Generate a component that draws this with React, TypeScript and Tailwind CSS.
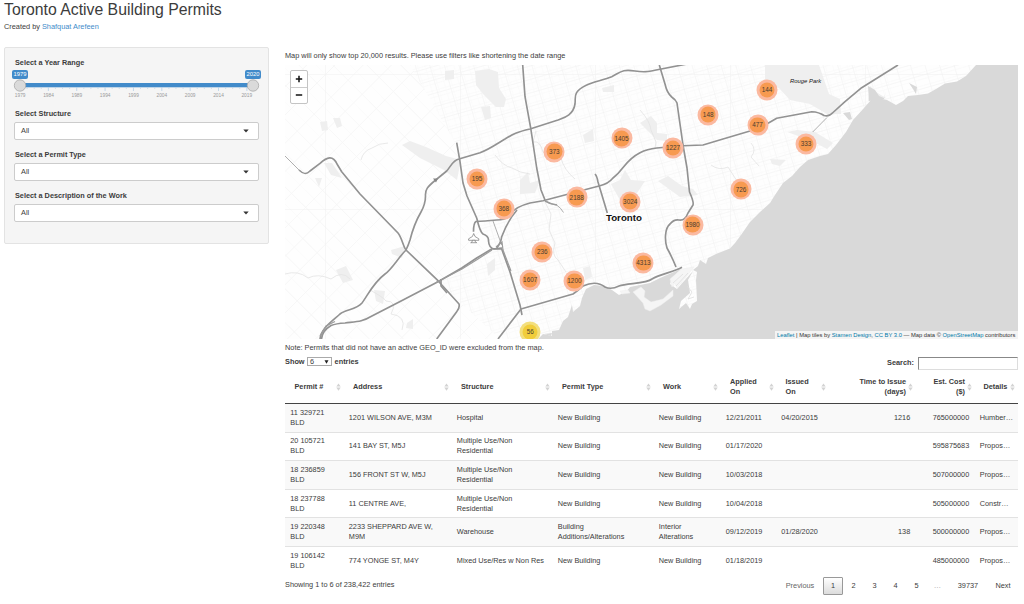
import React from "react";

type Marker = { n: number; x: number; y: number; small?: boolean };

const MAP_X = 285;
const MAP_Y = 65;

const markers: Marker[] = [
  { n: 144, x: 767, y: 90 },
  { n: 148, x: 708.2, y: 114.5 },
  { n: 477, x: 757.5, y: 125 },
  { n: 333, x: 806, y: 144 },
  { n: 1405, x: 621.5, y: 138.3 },
  { n: 1227, x: 673, y: 148.2 },
  { n: 373, x: 554.3, y: 151.7 },
  { n: 195, x: 477, y: 178.8 },
  { n: 726, x: 741, y: 189.3 },
  { n: 2188, x: 576.7, y: 197.3 },
  { n: 3024, x: 630.2, y: 201.5 },
  { n: 368, x: 503.8, y: 208.5 },
  { n: 1980, x: 692.5, y: 224.5 },
  { n: 236, x: 542.3, y: 251.8 },
  { n: 4313, x: 643.4, y: 263 },
  { n: 1607, x: 530.2, y: 279.8 },
  { n: 1200, x: 574.4, y: 281 },
  { n: 56, x: 530.2, y: 332, small: true },
];

const highways = [
  "M299 170C303 174 306 175 310 171L320 163.3C327 157 333 155 337 164L341.7 171.7L360 194L398 233C402 238 403 246 406 250L438 280.7L459 304Q460 308 456.7 311.7L436.7 339",
  "M687 64L660 69.3C650 71.5 645 72.5 635 71C622 69 621 72 611.7 76.7C604 80 592 82 586.7 85C572 92 576 97 575 104C573 116 563 118 558 120L530 129C517 132 513 134 505 139C498 143 490 149 480 152.7L459 159C453 160 451 166 446.7 171L435.7 180C427 187 425 190 425.5 196Q425.500 204 421 212C414 224 412 232 410 240Q408 246 406 250C398 258 392 269 385 274C373 283 368 295 362 303C356 310 346 309 340 314C334 320 321 328 320 339",
  "M321.500 339Q322 331 331 325.500Q336 323.500 345 323C357 321.500 363 321.500 370 317L403 300L438 281.7L461.7 268L476.7 258L491.7 249L502 248",
  "M441 279V286L447 293",
  "M456.7 142.7L460 161.7L463 183L467 196L476.7 218Q480 232 483 234Q489 236 488.500 241Q489 248 494 249H501.7L510 272L520 305L522 315",
  "M473.500 231.7Q473.500 223 476 221.500Q484 221 496.7 220Q508 220 512 213Q515 207 530 203L543 200.7L580 191L600 185.7Q608 184 613 178C625 169 624 161 640 152.7Q647 149 656.7 148L683 145.7L703 145L723 139L750 131L765 125L776.7 118.3L811.7 111.7Q819 112 824 115.500Q829 117 833 112.500L845 101.7L861.7 87.7L898 65",
  "M496.700 248Q501 243 501.700 236.700Q508 220 517 210",
  "M522.7 65L525 96.7L530.7 128L536.7 168L541 190L545 200",
  "M595 174Q597 176 598 182L607.3 213",
  "M659.3 65L665 84Q667 93 671.7 97Q676 100 677 103L683 145L687 168L689.5 192Q694 202 693 205L688 213Q685 221 679 220Q674 219 670 224C664 229 665 242 667 248Q672 257 676 267",
  "M498 339L521 309L573 294Q579 290 583 286C594 281 600 283 605 287Q611 290 619 286C627 283 646 284 652 279C660 274 674 272 682 267.3",
];

const parks = [
  "475,71 489,69 498,72 499,88 506,99 504,107 496,107 484,95 476,85",
  "445,71 454,70 454,79 445,80",
  "481,107 490,106 491,118 485,120",
  "402,145 410,141 426,147 446,156 461,160 457,180 444,170 420,158",
  "320,122 327,121 328,130 322,131",
  "333,118 340,118 342,126 337,128",
  "324,163 332,163 342,178 331,175",
  "315,178 322,178 319,187",
  "487,264 495,258 495,270 488,276",
  "391,250 405,246 402,258 392,254",
  "336,270 346,266 353,280 343,283",
  "374,290 385,291 383,304 376,301",
  "407,323 413,319 413,329 406,328",
  "583,268 590,266 592,277 585,280",
  "583,135 593,129 594,141 585,143",
  "602,88 614,85 614,92 603,92",
  "640,123 651,116 657,123 657,133 667,134 667,141 657,140 643,126",
  "765,65 819,65 829,94 840,99 841,114 827,114 810,104 790,100 779,88 765,85",
  "870,86 876,92 886,98 868,101",
  "658,181 668,176 682,186 693,189 698,195 680,197",
  "611,184 620,180 625,170 631,180 645,181 635,196 621,202",
  "787,132 797,130 815,132 833,143 827,149 810,140",
  "770,159 786,160 780,166 772,164",
  "520,180 528,172 530,183 540,180 535,193 520,194",
];

const streams = [
  "M361 160Q363 151 372 148Q379 143 388 143",
  "M285 274Q298 270 308 278Q318 273 331 279Q342 270 350 279",
  "M370 290Q383 297 386 301Q398 301 391 314Q407 316 402 330",
  "M536 131L533 142Q540 140 543 152Q552 160 561 158Q564 170 575 179",
  "M545 202L551 214L549 230L555 243Q551 255 558 260L566 272",
  "M640 110Q650 121 651 130L656 142L655 148",
  "M495 155Q503 166 512 168Q520 173 530 174",
  "M711 165Q719 171 728 167L737 181",
  "M751 143Q757 150 751 157L759 166",
];

function lineFamily(angle: number, gap: number, x0: number, y0: number) {
  const d: string[] = [];
  const a = (angle * Math.PI) / 180;
  const dx = Math.cos(a);
  const dy = Math.sin(a);
  for (let i = -40; i <= 40; i++) {
    const cx = x0 - dy * gap * i;
    const cy = y0 + dx * gap * i;
    d.push(
      `M${(cx - dx * 600).toFixed(1)} ${(cy - dy * 600).toFixed(1)}L${(cx + dx * 600).toFixed(1)} ${(cy + dy * 600).toFixed(1)}`
    );
  }
  return d.join("");
}

function BaseMap() {
  return (
    <svg viewBox="285 65 733 274" className="block h-[274px] w-[733px]">
      <defs>
        <clipPath id="west">
          <path d="M285 65H410L456 144L467 196L491 249L438 282L500 339H285Z" />
        </clipPath>
        <clipPath id="east">
          <path d="M410 65H1018V339H500L438 282L491 249L467 196L456 144Z" />
        </clipPath>
      </defs>
      <rect x="285" y="65" width="733" height="274" fill="#fefefe" />
      <g fill="none" stroke="#f2f2f2" strokeWidth="0.6">
        <g clipPath="url(#west)">
          <path d={lineFamily(45, 24, 300, 100)} />
          <path d={lineFamily(-45, 20, 300, 100)} />
          <path d={lineFamily(45, 12, 306, 106)} stroke="#f9f9f9" />
        </g>
        <g clipPath="url(#east)">
          <path d={lineFamily(-16, 13, 600, 100)} />
          <path d={lineFamily(74, 14, 600, 100)} />
          <path d={lineFamily(-16, 6.5, 603, 103)} stroke="#f9f9f9" />
          <path d={lineFamily(74, 7, 603, 103)} stroke="#fafafa" />
        </g>
        <path d="M325.500 65V339M460.500 65V339M595.500 65V339M730.500 65V339M865.500 65V339M285 74.500H1018M285 209.500H1018" />
      </g>
      <g fill="#efefef">
        {parks.map((p) => (
          <polygon key={p} points={p} />
        ))}
      </g>
      <g fill="none" stroke="#e3e3e3" strokeWidth="0.8">
        {streams.map((s) => (
          <path key={s} d={s} />
        ))}
      </g>
      <path
        fill="#d9d9d9"
        d="M1018 65H976L966 76L957 81.500L945 83.500L936 89L928 93.500L918 95L908 96L903 101L896 105L887 100L880 98.500L871 100L864 108L853 120L846 132L836 145L828 154L820 156L808 160L800 167L792 176L783 183L775 195L770 203L760 212L750 222L741 235L735 243L730 248.500L716 254L708 258L706 264L700 260L698 266L693 270L697 272L696 280L697 301L692 304L690 309L686 303L679 309L681 301L690 293L688 280L693 271L677 289L670 284L672 278L681 269L660 278L650 283L630 287L626 292L619 295L612 290L604 286L594 285L586 289L582 298L580 306L573 312L572 305L568 317L563 321L559 330L552 331L552 336L543 334L538 339H1018Z"
      />
      <g fill="#f5f5f5" stroke="#eeeeee" strokeWidth="0.5">
        <path d="M633 292L641 287L645 291L644 297L651 302L663 299L673 290L673 296L661 305L650 311L645 309L643 303Z" />
        <path d="M670 279L682 269L694 267L677 288L675 283L672 287Z" />
        <path d="M620 291L628 290L630 293L622 294Z" />
      </g>
      <g fill="#d9d9d9">
        <path d="M646 297L652 296L651 299L661 295L665 294L660 299L651 301Z" />
        <path d="M868 86L875 90L879 96L884 98L886 91L884 99L869 101Z M909 83L917 87L916 94L913 89Z M843 113L850 112L852 119L849 120Z M552 333L544 334L551 336Z" />
      </g>
      <path d="M673 283L683 274M676 286L688 273M687 286L692 292L688 299L694 297" stroke="#dedede" strokeWidth="0.8" fill="none" />
      <g fill="none" stroke="#929292" strokeWidth="1.650" strokeLinejoin="round">
        {highways.map((h) => (
          <path key={h} d={h} />
        ))}
      </g>
      <g fill="none" stroke="#9b9b9b" strokeWidth="0.8">
        <path d="M285 156L300 171M827 117.500L812.700 132M493 221L501.700 245M545 200Q548 204 556.700 205Q561 208 563.500 212.500" />
        <path d="M545 201Q550 204 557 205" strokeWidth="1.500" />
        <path d="M436 282.500L462 269L478 259L492 250M496 247L502 242L503 250L511 271M320 336L326 326L335 321.500" strokeWidth="1.200" />
      </g>
      <path d="M433 178.500L438 178.500L436 182.500Z" fill="#858585" />
      <g fill="#fff" stroke="#777" strokeWidth="0.7">
        <path d="M473.700 233.500L475 236.500L478.800 238.800V240.300H468.600V238.800L472.400 236.500Z" />
        <path d="M472.300 240.300H475.100V241.500L476.700 242.700H470.700L472.300 241.500Z" />
      </g>
    </svg>
  );
}

function PermitMap() {
  return (
    <div className="relative h-[274px] w-[733px] overflow-hidden">
      <BaseMap />
      <div className="absolute left-[505px] top-[12px] whitespace-nowrap text-[5.9px] italic leading-[9px] text-[#111]">Rouge Park</div>
      <div className="absolute left-[321px] top-[147px] whitespace-nowrap text-[9.7px] font-bold leading-[12px] text-[#111]">Toronto</div>
      {markers.map((m) => (
        <div
          key={m.n}
          className={`absolute flex size-[21px] -translate-x-1/2 -translate-y-1/2 items-center justify-center rounded-full ${m.small ? "bg-[#f3df7d]" : "bg-[#fbb9a0]"}`}
          style={{ left: m.x - MAP_X, top: m.y - MAP_Y }}
        >
          <div
            className={`flex size-[15.6px] items-center justify-center rounded-full text-[6.4px] leading-none text-[#4a3d30] ${m.small ? "bg-[#f1cd3b]" : "bg-[#f79a50]"}`}
          >
            {m.n}
          </div>
        </div>
      ))}
      <div className="absolute left-[5px] top-[5px] flex h-[34px] w-[18px] flex-col rounded-[2px] border border-[#c4c4c4] bg-white">
        <button className="flex flex-1 items-center justify-center border-b border-[#ccc]">
          <svg viewBox="0 0 8 8" className="size-[8px]"><path d="M0.800 4H7.200M4 0.800V7.200" stroke="#111" strokeWidth="1.500" /></svg>
        </button>
        <button className="flex flex-1 items-center justify-center">
          <svg viewBox="0 0 8 8" className="size-[8px]"><path d="M0.800 4H7.200" stroke="#111" strokeWidth="1.500" /></svg>
        </button>
      </div>
      <div className="absolute bottom-0 right-0 h-[8px] w-[243px] whitespace-nowrap bg-white/70 pl-[2px] text-[5.8px] leading-[8px] text-[#333]">
        <span className="text-[#0078a8]">Leaflet</span> | Map tiles by <span className="text-[#0078a8]">Stamen Design</span>,{" "}
        <span className="text-[#0078a8]">CC BY 3.0</span> — Map data © <span className="text-[#0078a8]">OpenStreetMap</span> contributors
      </div>
    </div>
  );
}

const years = ["1979", "1984", "1989", "1994", "1999", "2004", "2009", "2014", "2019"];

function YearSlider() {
  const ticks = Array.from({ length: 33 }, (_, i) => i);
  return (
    <div className="-ml-[3px] w-[249px]">
      <div className="flex h-[9px] justify-between">
        {["1979", "2020"].map((y) => (
          <span key={y} className="flex h-[9px] w-[16px] items-center justify-center rounded-[2px] bg-[#428bca] text-[5.8px] leading-none text-white">
            {y}
          </span>
        ))}
      </div>
      <svg viewBox="0 0 249 15" className="block h-[15px] w-[249px]">
        <rect x="4" y="4" width="240" height="4.300" fill="#428bca" />
        {ticks.map((i) => (
          <path
            key={i}
            d={`M${8 + i * 7.09} ${8.5}V${i % 4 === 0 ? 12 : 10}`}
            stroke={i % 4 === 0 ? "#9dc3e4" : "#b9cfe2"}
            strokeWidth="0.6"
          />
        ))}
        <circle cx="8" cy="6.500" r="5.700" fill="#dadada" stroke="#aaa" strokeWidth="0.8" />
        <circle cx="241" cy="6.500" r="5.700" fill="#dadada" stroke="#aaa" strokeWidth="0.8" />
      </svg>
      <div className="-mt-[1px] ml-[-6px] flex w-[255px] text-[4.800px] leading-[6px] text-[#999]">
        {years.map((y) => (
          <span key={y} className="w-[28.35px] text-center">{y}</span>
        ))}
      </div>
    </div>
  );
}

function Select({ label }: { label: string }) {
  return (
    <div className="mb-[9.3px]">
      <div className="mb-[2px] text-[7.3px] font-bold leading-[12px]">{label}</div>
      <div className="-ml-[1px] flex h-[18px] w-[245px] items-center justify-between rounded-[2px] border border-[#ccc] bg-white pl-[6px] pr-[9px] text-[7.35px]">
        <span>All</span>
        <svg viewBox="0 0 6 4" className="h-[4px] w-[6px]"><path d="M0.300 0.500H5.700L3 3.500Z" fill="#333" /></svg>
      </div>
    </div>
  );
}

const columns = [
  { t: ["Permit #"], w: "w-[58.5px]" },
  { t: ["Address"], w: "w-[108px]" },
  { t: ["Structure"], w: "w-[101px]" },
  { t: ["Permit Type"], w: "w-[101px]" },
  { t: ["Work"], w: "w-[67px]" },
  { t: ["Applied", "On"], w: "w-[55.5px]" },
  { t: ["Issued", "On"], w: "w-[52.5px]" },
  { t: ["Time to Issue", "(days)"], w: "w-[87px]", r: true },
  { t: ["Est. Cost", "($)"], w: "w-[59px]", r: true },
  { t: ["Details"], w: "w-[43px]" },
];

const rows: string[][] = [
  ["11 329721\nBLD", "1201 WILSON AVE, M3M", "Hospital", "New Building", "New Building", "12/21/2011", "04/20/2015", "1216", "765000000", "Humber…"],
  ["20 105721\nBLD", "141 BAY ST, M5J", "Multiple Use/Non\nResidential", "New Building", "New Building", "01/17/2020", "", "", "595875683", "Propos…"],
  ["18 236859\nBLD", "156 FRONT ST W, M5J", "Multiple Use/Non\nResidential", "New Building", "New Building", "10/03/2018", "", "", "507000000", "Propos…"],
  ["18 237788\nBLD", "11 CENTRE AVE,", "Multiple Use/Non\nResidential", "New Building", "New Building", "10/04/2018", "", "", "505000000", "Constr…"],
  ["19 220348\nBLD", "2233 SHEPPARD AVE W,\nM9M", "Warehouse", "Building\nAdditions/Alterations", "Interior\nAlterations", "09/12/2019", "01/28/2020", "138", "500000000", "Propos…"],
  ["19 106142\nBLD", "774 YONGE ST, M4Y", "Mixed Use/Res w Non Res", "New Building", "New Building", "01/18/2019", "", "", "485000000", "Propos…"],
];

function SortIcon() {
  return (
    <svg viewBox="0 0 5 8" className="h-[8px] w-[5px] shrink-0">
      <path d="M0.300 3.600L2.500 0.400L4.700 3.600ZM0.300 4.500L2.500 7.700L4.700 4.500Z" fill="#d3d3d3" />
    </svg>
  );
}

function PermitTable() {
  return (
    <table className="w-[732.5px] table-fixed border-collapse text-[7.3px] leading-[10px]">
      <thead>
        <tr className="h-[32.5px] border-b border-[#444]">
          {columns.map((c) => (
            <th key={c.t[0]} className={`${c.w} p-0 align-middle`}>
              <div className={`flex items-center pr-[2.500px] ${c.t[0] === "Details" ? "pl-[9px]" : "pl-[9.5px]"} ${c.r ? "justify-end gap-[2px] text-right" : "justify-between text-left"}`}>
                <span className="whitespace-nowrap">
                  {c.t.map((l) => (
                    <span key={l} className="block">{l}</span>
                  ))}
                </span>
                <SortIcon />
              </div>
            </th>
          ))}
        </tr>
      </thead>
      <tbody>
        {rows.map((r) => (
          <tr key={r[0]} className="h-[28.6px] border-b border-[#e2e2e2] odd:bg-[#f9f9f9] last:border-b-0">
            {r.map((v, i) => (
              <td key={i} className={`whitespace-pre px-[5.3px] py-0 align-middle ${i === 7 || i === 8 ? "text-right" : ""}`}>
                {v}
              </td>
            ))}
          </tr>
        ))}
      </tbody>
    </table>
  );
}

export default function App() {
  return (
    <div className="h-[604px] w-[1024px] overflow-hidden bg-white font-['Liberation_Sans',Arial,sans-serif] text-[7.35px] leading-[10px] text-[#3c3c3c]">
      <header className="h-[47px] pl-[4px]">
        <h1 className="whitespace-nowrap text-[15.8px] leading-[20px]">Toronto Active Building Permits</h1>
        <p className="mt-[2px]">
          Created by <a className="text-[#428bca]">Shafquat Arefeen</a>
        </p>
      </header>
      <div className="flex">
        <aside className="ml-[4px] h-[197px] w-[265px] shrink-0 rounded-[2px] border border-[#e3e3e3] bg-[#f5f5f5] pl-[10px] pt-[9px]">
          <div className="mb-[2px] text-[7.3px] font-bold leading-[11px]">Select a Year Range</div>
          <YearSlider />
          <div className="h-[8.700px]" />
          <Select label="Select Structure" />
          <Select label="Select a Permit Type" />
          <Select label="Select a Description of the Work" />
        </aside>
        <main className="ml-[16px] w-[733px] shrink-0">
          <p className="h-[18px] whitespace-nowrap pt-[3.500px]">Map will only show top 20,000 results. Please use filters like shortening the date range</p>
          <PermitMap />
          <p className="h-[14px] pt-[3.500px]">Note: Permits that did not have an active GEO_ID were excluded from the map.</p>
          <div className="flex h-[18px] justify-between font-bold">
            <div className="flex h-[18px] items-start pt-[4px]">
              <span>Show</span>
              <span className="mx-[2.500px] flex h-[9px] w-[25px] items-center justify-between border border-[#aaa] bg-white pl-[2px] pr-[2px] font-normal leading-none">
                6
                <svg viewBox="0 0 5 4" className="h-[4px] w-[5px]"><path d="M0.500 0.300H4.500L2.500 3.700Z" fill="#222" /></svg>
              </span>
              <span>entries</span>
            </div>
            <div className="flex h-[18px] items-start gap-[4px] pt-[4.500px]">
              <span>Search:</span>
              <span className="-mt-[0.5px] h-[13px] w-[100px] border border-b-[#ddd] border-l-[#888] border-r-[#ddd] border-t-[#888] bg-white" />
            </div>
          </div>
          <PermitTable />
          <div className="flex justify-between pt-[2px]">
            <span className="pt-[3px]">Showing 1 to 6 of 238,422 entries</span>
            <nav className="flex h-[18px] items-center text-center">
              <span className="w-[38px] text-[#666]">Previous</span>
              <span className="ml-[4px] flex h-[18px] w-[20px] items-center justify-center rounded-[1px] border border-[#999] bg-linear-to-b from-white to-[#dcdcdc]">1</span>
              {["2", "3", "4", "5"].map((p) => (
                <span key={p} className="w-[21px]">{p}</span>
              ))}
              <span className="w-[21px] text-[#999]">…</span>
              <span className="w-[40px]">39737</span>
              <span className="w-[30px]">Next</span>
            </nav>
          </div>
        </main>
      </div>
    </div>
  );
}
